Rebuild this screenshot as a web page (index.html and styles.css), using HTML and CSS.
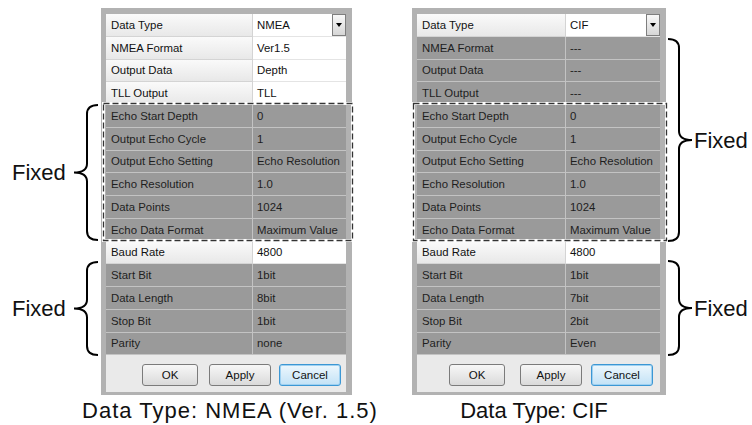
FILE: index.html
```html
<!DOCTYPE html>
<html>
	<head>
		<meta charset="UTF-8">
		<meta name="viewport" content="width=device-width, initial-scale=1.0" />
		<title>Data Type</title>
		<link rel="stylesheet" href="styles.css">
	</head>
	<body>
		<div class="figure">
			<div class="panels">
				<div class="panel panel-nmea">
					<div class="row light"><div class="key">Data Type</div><div class="val">NMEA<span class="drop"></span></div></div>
					<div class="row light"><div class="key">NMEA Format</div><div class="val">Ver1.5</div></div>
					<div class="row light"><div class="key">Output Data</div><div class="val">Depth</div></div>
					<div class="row light"><div class="key">TLL Output</div><div class="val">TLL</div></div>
					<div class="row dark"><div class="key">Echo Start Depth</div><div class="val">0</div></div>
					<div class="row dark"><div class="key">Output Echo Cycle</div><div class="val">1</div></div>
					<div class="row dark"><div class="key">Output Echo Setting</div><div class="val">Echo Resolution</div></div>
					<div class="row dark"><div class="key">Echo Resolution</div><div class="val">1.0</div></div>
					<div class="row dark"><div class="key">Data Points</div><div class="val">1024</div></div>
					<div class="row dark"><div class="key">Echo Data Format</div><div class="val">Maximum Value</div></div>
					<div class="row light"><div class="key">Baud Rate</div><div class="val">4800</div></div>
					<div class="row dark"><div class="key">Start Bit</div><div class="val">1bit</div></div>
					<div class="row dark"><div class="key">Data Length</div><div class="val">8bit</div></div>
					<div class="row dark"><div class="key">Stop Bit</div><div class="val">1bit</div></div>
					<div class="row dark"><div class="key">Parity</div><div class="val">none</div></div>
					<div class="buttons">
						<button class="ok">OK</button>
						<button>Apply</button>
						<button class="primary">Cancel</button>
					</div>
					<svg class="fixed-box" width="252" height="140"><rect class="halo" x="1.5" y="1.5" width="249" height="137"/><rect class="dash" x="1.5" y="1.5" width="249" height="137"/></svg>
				</div>

				<div class="panel panel-cif">
					<div class="row light"><div class="key">Data Type</div><div class="val">CIF<span class="drop"></span></div></div>
					<div class="row dark"><div class="key">NMEA Format</div><div class="val">---</div></div>
					<div class="row dark"><div class="key">Output Data</div><div class="val">---</div></div>
					<div class="row dark"><div class="key">TLL Output</div><div class="val">---</div></div>
					<div class="row dark"><div class="key">Echo Start Depth</div><div class="val">0</div></div>
					<div class="row dark"><div class="key">Output Echo Cycle</div><div class="val">1</div></div>
					<div class="row dark"><div class="key">Output Echo Setting</div><div class="val">Echo Resolution</div></div>
					<div class="row dark"><div class="key">Echo Resolution</div><div class="val">1.0</div></div>
					<div class="row dark"><div class="key">Data Points</div><div class="val">1024</div></div>
					<div class="row dark"><div class="key">Echo Data Format</div><div class="val">Maximum Value</div></div>
					<div class="row light"><div class="key">Baud Rate</div><div class="val">4800</div></div>
					<div class="row dark"><div class="key">Start Bit</div><div class="val">1bit</div></div>
					<div class="row dark"><div class="key">Data Length</div><div class="val">7bit</div></div>
					<div class="row dark"><div class="key">Stop Bit</div><div class="val">2bit</div></div>
					<div class="row dark"><div class="key">Parity</div><div class="val">Even</div></div>
					<div class="buttons">
						<button class="ok">OK</button>
						<button>Apply</button>
						<button class="primary">Cancel</button>
					</div>
					<svg class="fixed-box" width="256" height="140"><rect class="halo" x="1.5" y="1.5" width="253" height="137"/><rect class="dash" x="1.5" y="1.5" width="253" height="137"/></svg>
				</div>
			</div>

			<div class="captions">
				<div class="cap cap-l">Data Type: NMEA (Ver. 1.5)</div>
				<div class="cap cap-r">Data Type: CIF</div>
			</div>

			<!-- callouts -->
			<div class="note note-l1">
				<span>Fixed</span>
				<svg class="brace" width="26" height="137"><path d="M25,1 C19,1 14,3 14,10 L14,59.5 C14,65.5 9,68.5 1,68.5 C9,68.5 14,71.5 14,77.5 L14,127 C14,134 19,136 25,136"/></svg>
			</div>
			<div class="note note-l2">
				<span>Fixed</span>
				<svg class="brace" width="26" height="95"><path d="M25,1 C19,1 14,3 14,10 L14,38.5 C14,44.5 9,47.5 1,47.5 C9,47.5 14,50.5 14,56.5 L14,85 C14,92 19,94 25,94"/></svg>
			</div>
			<div class="note note-r1">
				<svg class="brace flip" width="26" height="204"><path d="M25,1 C19,1 14,3 14,10 L14,93 C14,99 9,102 1,102 C9,102 14,105 14,111 L14,194 C14,201 19,203 25,203"/></svg>
				<span>Fixed</span>
			</div>
			<div class="note note-r2">
				<svg class="brace flip" width="26" height="96"><path d="M25,1 C19,1 14,3 14,10 L14,39 C14,45 9,48 1,48 C9,48 14,51 14,57 L14,86 C14,93 19,95 25,95"/></svg>
				<span>Fixed</span>
			</div>
		</div>
	</body>
</html>
```

FILE: styles.css
```css
body{margin:0;padding:0;background:#fff;font-family:"Liberation Sans",Arial,sans-serif;color:#111;}
.figure{position:relative;width:752px;height:425px;overflow:hidden;}

.panels{display:flex;gap:60px;padding:8px 0 0 101px;}
.panel{position:relative;border:solid #b2b2b2;border-width:6px 6px 3px 5px;background:#b2b2b2;}
.panel-nmea{width:240px;}
.panel-cif{width:243px;}

.row{display:grid;grid-template-columns:147px 1fr;height:22.75px;font-size:11.4px;}
.panel-cif .row{grid-template-columns:149px 1fr;}
.key,.val{display:flex;align-items:center;box-sizing:border-box;border-bottom:1px solid;white-space:nowrap;}
.key{padding-left:5px;border-right:1px solid;}
.val{padding-left:4px;}
.light .key{background:linear-gradient(#fafafa,#e8e8e8);border-color:#d4d4d4;color:#111;}
.light .val{background:#fff;border-color:#e4e4e4;color:#111;}
.dark .key,.dark .val{background:#9a9a9a;border-color:#c3c3c3;color:#1e1e1e;}

.drop{margin-left:auto;align-self:stretch;width:12px;border:1px solid #7e7e7e;background:linear-gradient(#f8f8f8,#d6d6d6);display:flex;align-items:center;justify-content:center;}
.drop::after{content:"";border-left:3.5px solid transparent;border-right:3.5px solid transparent;border-top:4px solid #000;}

.buttons{height:37px;box-sizing:border-box;background:#eaeaea;display:flex;justify-content:flex-end;align-items:flex-start;gap:8px;padding:9px 5px 0 0;}
.panel-cif .buttons{padding-right:7px;gap:9px;}
.buttons button{width:62px;height:22px;padding:0;font:11.5px "Liberation Sans",Arial,sans-serif;color:#111;border:1px solid #7b7b7b;border-radius:3px;background:linear-gradient(#f7f7f7,#dadada);}
.buttons .ok{width:56px;margin-right:3px;}
.panel-cif .buttons .ok{margin-right:6px;}
.buttons .primary{border-color:#3c97d4;background:linear-gradient(#edf7fd,#c3e2f6);box-shadow:inset 0 0 0 1px #9fd1f1;}

.fixed-box{position:absolute;top:88px;left:-4px;}
.panel-cif .fixed-box{left:-5px;}
.fixed-box rect{fill:none;}
.fixed-box .halo{stroke:#fff;stroke-width:3;}
.fixed-box .dash{stroke:#333;stroke-width:1.3;stroke-dasharray:6 3;}

.captions{display:flex;padding-left:60px;margin-top:3px;font-size:22px;line-height:25px;color:#111;}
.cap{text-align:center;white-space:nowrap;}
.cap-l{width:340px;letter-spacing:1px;}
.cap-r{width:188px;margin-left:40px;}

.note{position:absolute;display:flex;align-items:center;gap:7px;font-size:22px;line-height:25px;color:#111;}
.note-l1{left:12px;top:104px;}
.note-l2{left:12px;top:261px;}
.note-r1{left:667px;top:38px;gap:1px;}
.note-r2{left:667px;top:260px;gap:1px;}
.brace{display:block;}
.brace path{fill:none;stroke:#000;stroke-width:2;}
.brace.flip{transform:scaleX(-1);}
```
